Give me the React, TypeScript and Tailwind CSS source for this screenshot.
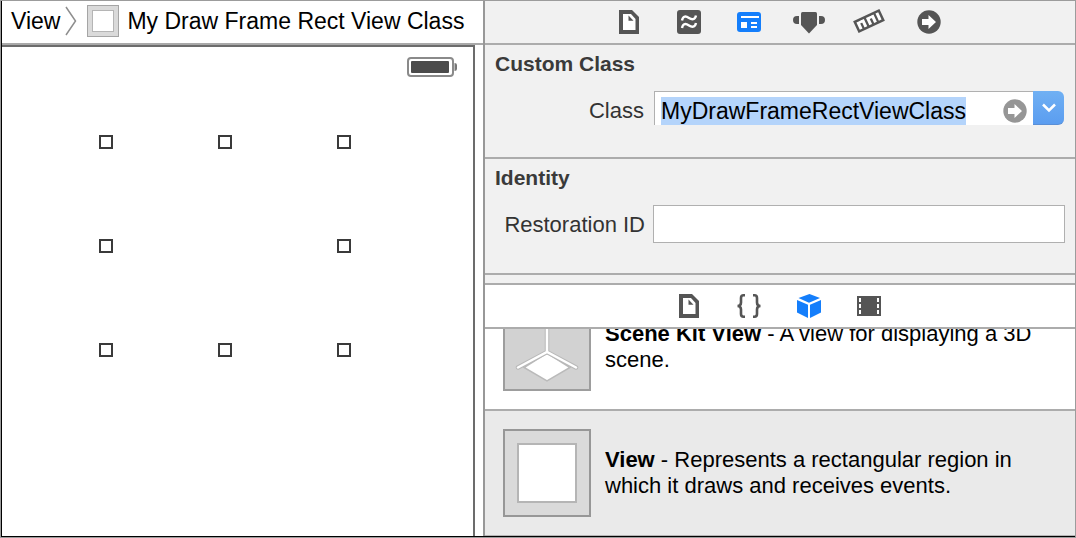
import type { ReactNode } from 'react';

interface TabButtonProps {
  label: string;
  active?: boolean;
  children: ReactNode;
}

interface LibraryItemProps {
  name: string;
  description: string;
  selected?: boolean;
  children: ReactNode;
}

// Selection handles around the view, row by row (the middle cell is empty)
const HANDLES = [true, true, true, true, false, true, true, true, true];

function FileIcon() {
  return (
    <svg width="24" height="24" viewBox="0 0 24 24">
      <path d="M2 0h13l7 7v17H2z" fill="currentColor" />
      <path d="M6 4h8l4.500 5v11H6z" fill="#fff" />
      <path d="M11.500 5.500l5 5.200h-5z" fill="currentColor" />
    </svg>
  );
}

function HelpIcon() {
  return (
    <svg width="24" height="24" viewBox="0 0 24 24">
      <rect width="24" height="24" rx="3" fill="currentColor" />
      <g fill="none" stroke="#fff" strokeWidth="2.400">
        <path d="M5 10.500C6 5.500 9 6 12 8s6 2 7-2.500" />
        <path d="M5 18c1-5 4-4.500 7-2.500s6 2 7-2.500" />
      </g>
    </svg>
  );
}

function IdentityIcon() {
  return (
    <svg width="24" height="24" viewBox="0 0 24 24">
      <rect y="2" width="24" height="20" rx="3" fill="currentColor" />
      <path d="M4 6h18v2H4zM4 12h6v6H4zM14 12h6v2h-6zM14 16h6v2h-6z" fill="#fff" />
    </svg>
  );
}

function AttributesIcon() {
  return (
    <svg width="32" height="24" viewBox="0 0 32 24" fill="currentColor">
      <path d="M8 3.500Q8 2 9.500 2h13Q24 2 24 3.500V15l-8 8.500L8 15z" />
      <path d="M6 6H4a4 4 0 0 0 0 8h2zM26 6h2a4 4 0 0 1 0 8h-2z" />
    </svg>
  );
}

function RulerIcon() {
  return (
    <svg width="32" height="26" viewBox="0 0 32 26">
      <g transform="rotate(-25 16 12)">
        <rect x="1.500" y="5.500" width="29" height="13" fill="currentColor" />
        <path
          d="M4 8h3v8H4zM9.200 8h3v8h-3zM14.500 8h3v8h-3zM19.800 8h3v8h-3zM25 8h3v8h-3zM7 8h2.500v2.500H7zM17.500 8h2.500v2.500h-2.500z"
          fill="#fff"
        />
      </g>
    </svg>
  );
}

function ArrowCircleIcon() {
  return (
    <svg width="24" height="24" viewBox="0 0 24 24">
      <circle cx="12" cy="12" r="11.700" fill="currentColor" />
      <path d="M5 9h6.500V5l7.500 7-7.500 7v-4H5z" fill="#fff" />
    </svg>
  );
}

function BracesIcon() {
  return (
    <svg width="24" height="24" viewBox="0 0 24 24" fill="none" stroke="currentColor" strokeWidth="2.600">
      <path d="M8 1.300H6.500Q4 1.300 4 4v4.500Q4 12 .5 12 4 12 4 15.500V20q0 2.700 2.500 2.700H8" />
      <path d="M16 1.300h1.500Q20 1.300 20 4v4.500q0 3.500 3.500 3.500-3.500 0-3.500 3.500V20q0 2.700-2.500 2.700H16" />
    </svg>
  );
}

function CubeIcon() {
  return (
    <svg width="24" height="26" viewBox="0 0 24 26" fill="currentColor">
      <path d="M12.500 1L23 5l-11 4.700L1.500 5z" />
      <path d="M0 7l11 4.800V25L0 19.500zM24 7l-11 4.800V25l11-5.500z" />
    </svg>
  );
}

function FilmIcon() {
  return (
    <svg width="24" height="24" viewBox="0 0 24 24">
      <path d="M0 2h24v20H0z" fill="currentColor" />
      <path
        d="M2 4h2v4H2zM2 10h2v4H2zM2 16h2v4H2zM20 4h2v4h-2zM20 10h2v4h-2zM20 16h2v4h-2z"
        fill="#fff"
      />
    </svg>
  );
}

function BatteryIcon() {
  return (
    <svg width="50" height="20" viewBox="0 0 50 20">
      <rect x="1" y="1" width="45" height="18" rx="3" fill="none" stroke="#8a8a8a" strokeWidth="2" />
      <rect x="4" y="4" width="38" height="12" rx="1" fill="#4b4b4b" />
      <path d="M47.500 6q2.500 0 2.500 2v4q0 2-2.500 2z" fill="#777" />
    </svg>
  );
}

function TabButton({ label, active, children }: TabButtonProps) {
  return (
    <button
      type="button"
      aria-label={label}
      className={`flex h-[42px] w-[60px] items-center justify-center ${active ? 'text-[#147efb]' : 'text-[#555555]'}`}
    >
      {children}
    </button>
  );
}

function LibraryItem({ name, description, selected, children }: LibraryItemProps) {
  return (
    <li
      className={`flex items-center gap-3.5 py-[18px] pl-[18px] pr-2.5 ${selected ? 'border-b border-[#b5b5b5] bg-[#eaeaea]' : 'border-b-2 border-[#acacac] bg-white'}`}
    >
      {children}
      <p className="text-[22px] leading-[26px] text-black">
        <strong>{name}</strong> - {description}
      </p>
    </li>
  );
}

export default function App() {
  return (
    <div className="flex min-h-screen border border-[#9c9c9c] bg-white font-['Liberation_Sans',Arial,sans-serif]">
      <div className="grid flex-1 grid-cols-[481fr_592fr] border-b border-l border-black">
        {/* Editor */}
        <main className="flex min-w-0 flex-col">
          <nav className="flex h-11 items-center overflow-hidden whitespace-nowrap border-b-2 border-[#a9a9a9] pb-0.5 pl-[9px] text-[23px] leading-7 text-black">
            <a href="#view">View</a>
            <svg width="12" height="30" viewBox="0 0 12 30" className="ml-[5px] mr-2.5 shrink-0" fill="none" stroke="#8e8e8e" strokeWidth="1.500">
              <path d="M1 1l9.500 14L1 29" />
            </svg>
            <a href="#class" className="flex items-center gap-2">
              <span className="size-8 border border-[#a5a5a5] bg-[#dadada] p-1">
                <span className="block size-full border border-[#b5b5b5] bg-white" />
              </span>
              My Draw Frame Rect View Class
            </a>
          </nav>

          <div className="mr-2 flex flex-1 flex-col border-r-2 border-t-2 border-[#6c6c6c]">
            <div className="flex justify-end pr-4 pt-2.5">
              <BatteryIcon />
            </div>
            <div className="ml-[97px] mt-[58px] grid h-[222px] w-[252px] grid-cols-[14px_14px_14px] content-between justify-between">
              {HANDLES.map((visible, i) => (
                <span key={i} className={visible ? 'size-3.5 border-2 border-[#3a3a3a]' : 'size-3.5'} />
              ))}
            </div>
          </div>
        </main>

        {/* Inspector */}
        <aside className="flex min-w-0 flex-col border-l-2 border-[#989898] bg-[#f1f1f1]">
          <div className="flex h-11 justify-center border-b-2 border-[#acacac] pr-0.5">
            <TabButton label="File inspector"><FileIcon /></TabButton>
            <TabButton label="Quick help"><HelpIcon /></TabButton>
            <TabButton label="Identity inspector" active><IdentityIcon /></TabButton>
            <TabButton label="Attributes inspector"><AttributesIcon /></TabButton>
            <TabButton label="Size inspector"><RulerIcon /></TabButton>
            <TabButton label="Connections inspector"><ArrowCircleIcon /></TabButton>
          </div>

          <section className="border-b-2 border-[#acacac] px-2.5 pb-7 pt-[7px]">
            <h2 className="text-[21px] font-bold leading-6 text-[#3a3a3a]">Custom Class</h2>
            <div className="mt-[15px] flex h-[38px] gap-2.5">
              <label htmlFor="class" className="w-[149px] shrink-0 pt-0.5 text-right text-[22px] leading-9 text-[#333333]">
                Class
              </label>
              <div className="flex h-[34px] min-w-0 flex-1">
                <div className="flex min-w-0 flex-1 items-end justify-between border-l border-t border-[#b0b0b0] bg-white px-1.5">
                  <input
                    id="class"
                    type="text"
                    defaultValue="MyDrawFrameRectViewClass"
                    className="field-sizing-content h-7 min-w-0 bg-[#b4d4fb] text-[23px] leading-7 text-black outline-none"
                  />
                  <button type="button" aria-label="Go to class" className="mb-0.5 shrink-0 text-[#969696]">
                    <ArrowCircleIcon />
                  </button>
                </div>
                <button
                  type="button"
                  aria-label="Show classes"
                  className="mr-px flex w-[31px] shrink-0 items-center justify-center rounded-r-md border-b border-[#5a8fd6] bg-linear-to-b from-[#70b0f3] to-[#5b9df0]"
                >
                  <svg width="16" height="10" viewBox="0 0 16 10" fill="none" stroke="#fff" strokeWidth="2.500">
                    <path d="M2 1.500l6 6 6-6" />
                  </svg>
                </button>
              </div>
            </div>
          </section>

          <section className="border-b-2 border-[#acacac] px-2.5 pb-[30px] pt-[7px]">
            <h2 className="text-[21px] font-bold leading-6 text-[#3a3a3a]">Identity</h2>
            <div className="mt-[15px] flex h-[38px] gap-2">
              <label htmlFor="restoration-id" className="w-[150px] shrink-0 whitespace-nowrap pt-0.5 text-right text-[22px] leading-9 text-[#333333]">
                Restoration ID
              </label>
              <input
                id="restoration-id"
                type="text"
                className="min-w-0 flex-1 border border-[#b0b0b0] bg-white px-1.5 text-[23px] outline-none"
              />
            </div>
          </section>

          {/* Library */}
          <div className="mt-2 flex h-[46px] shrink-0 justify-center border-y-2 border-[#acacac] bg-white pr-0.5">
            <TabButton label="File templates"><FileIcon /></TabButton>
            <TabButton label="Code snippets"><BracesIcon /></TabButton>
            <TabButton label="Object library" active><CubeIcon /></TabButton>
            <TabButton label="Media library"><FilmIcon /></TabButton>
          </div>

          <div className="flex-1 overflow-hidden">
            {/* the list is scrolled, so its first row is cut at the top */}
            <ul className="-mt-11">
              <LibraryItem name="Scene Kit View" description="A view for displaying a 3D scene.">
                <svg width="88" height="88" viewBox="0 0 88 88" className="shrink-0">
                  <rect x="1" y="1" width="86" height="86" fill="#d2d2d2" stroke="#9d9d9d" strokeWidth="2" />
                  <path d="M44 50l23 14.500-23 13.500-23-13.500z" fill="#fff" stroke="#bababa" strokeWidth="1.500" />
                  <g fill="none" strokeLinecap="round">
                    <path d="M44 10v39M15 64.500L44 49l29 15.500" stroke="#b8b8b8" strokeWidth="4.500" />
                    <path d="M44 10v39M15 64.500L44 49l29 15.500" stroke="#fff" strokeWidth="2.500" />
                  </g>
                </svg>
              </LibraryItem>
              <LibraryItem name="View" description="Represents a rectangular region in which it draws and receives events." selected>
                <span className="size-[88px] shrink-0 border-2 border-[#979797] bg-[#dadada] p-3">
                  <span className="block size-full border-2 border-[#b5b5b5] bg-white" />
                </span>
              </LibraryItem>
            </ul>
          </div>
        </aside>
      </div>
    </div>
  );
}
